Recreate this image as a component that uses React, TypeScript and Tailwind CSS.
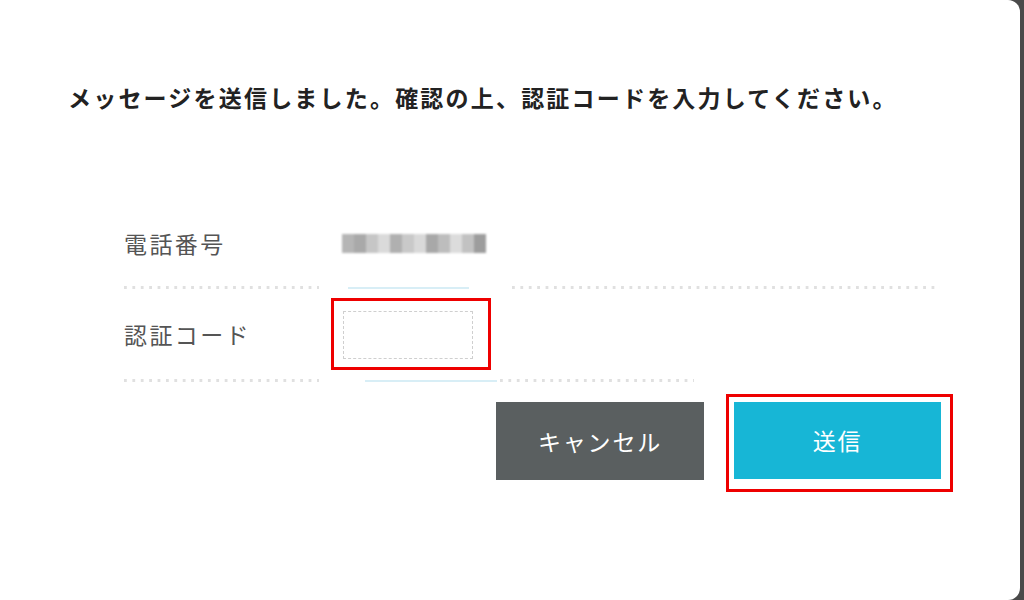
import React from 'react';

const jp = "font-['Noto_Sans_CJK_JP','Noto_Sans',sans-serif]";

const dots = 'h-[3px] bg-[linear-gradient(to_right,#e0e0e0_3px,transparent_3px)] bg-[length:8.4px_3px] bg-repeat-x';
const cyanLine = 'h-[2px] bg-[#d8eef6]';

const BlurredNumber: React.FC = () => {
  const blocks = ['#b5b5b5', '#a9a9a9', '#c6c6c6', '#dadada', '#b0b0b0', '#c9c9c9', '#d9d9d9', '#a8a8a8', '#bdbdbd', '#dcdcdc', '#c2c2c2', '#9d9d9d'];
  return (
    <div className="flex h-[19px] blur-[1px]">
      {blocks.map((c, i) => (
        <div key={i} className="w-[12px] h-full" style={{ backgroundColor: c }} />
      ))}
    </div>
  );
};

const App: React.FC = () => {
  return (
    <div className={`w-[1024px] h-[600px] bg-[#4a4a4a] ${jp}`}>
      <div className="w-[1020px] h-[600px] bg-white rounded-r-[12px] pt-[81px]">
        <h1 className="pl-[68px] text-[23px] leading-[32px] font-bold text-[#222] tracking-[2.2px]">
          メッセージを送信しました。確認の上、認証コードを入力してください。
        </h1>

        <div className="ml-[124px] mt-[87px] w-[840px]">
          {/* phone row */}
          <div className="flex items-center h-[86px]">
            <div className="w-[218px] text-[23px] tracking-[2.4px] text-[#555]">電話番号</div>
            <BlurredNumber />
          </div>
          <div className="flex items-center w-[816px]">
            <div className={`w-[195px] ${dots}`} />
            <div className="w-[29px]" />
            <div className={`w-[121px] ${cyanLine}`} />
            <div className="w-[43px]" />
            <div className={`flex-1 ${dots}`} />
          </div>

          {/* code row */}
          <div className="flex items-center h-[90px]">
            <div className="w-[207px] text-[23px] tracking-[2.4px] text-[#555]">認証コード</div>
            <div className="w-[160px] h-[72px] border-[3px] border-[#ee0000] pl-[9px] pt-[10px]">
              <input className="w-[130px] h-[48px] border border-dashed border-[#cfcfcf] outline-none bg-white" />
            </div>
          </div>
          <div className="flex items-center w-[570px]">
            <div className={`w-[195px] ${dots}`} />
            <div className="w-[46px]" />
            <div className={`w-[132px] ${cyanLine}`} />
            <div className="w-[3px]" />
            <div className={`flex-1 ${dots}`} />
          </div>

          {/* buttons */}
          <div className="flex items-start mt-[12px] pl-[372px]">
            <button className="shrink-0 mt-[8px] w-[208px] h-[78px] bg-[#5a5f60] text-white text-[23px] tracking-[1.8px]">
              キャンセル
            </button>
            <div className="shrink-0 ml-[22px] w-[227px] h-[98px] border-[3px] border-[#ee0000] pl-[5px] pt-[5px]">
              <button className="w-[207px] h-[77px] bg-[#17b6d6] text-white text-[23px] tracking-[1.8px]">
                送信
              </button>
            </div>
          </div>
        </div>
      </div>
    </div>
  );
};

export default App;
